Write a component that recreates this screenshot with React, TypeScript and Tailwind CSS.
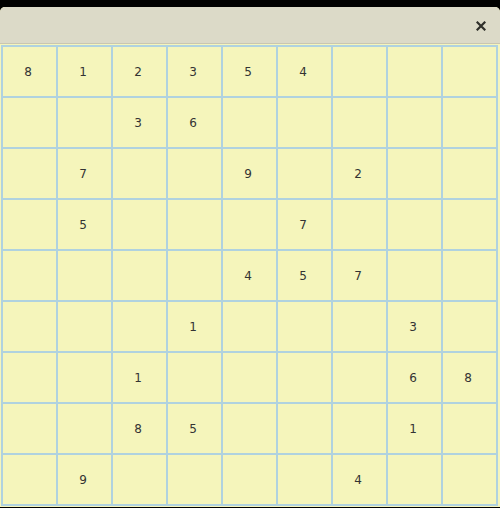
import React from 'react';

// 0 = empty cell
const board: number[][] = [
  [8, 1, 2, 3, 5, 4, 0, 0, 0],
  [0, 0, 3, 6, 0, 0, 0, 0, 0],
  [0, 7, 0, 0, 9, 0, 2, 0, 0],
  [0, 5, 0, 0, 0, 7, 0, 0, 0],
  [0, 0, 0, 0, 4, 5, 7, 0, 0],
  [0, 0, 0, 1, 0, 0, 0, 3, 0],
  [0, 0, 1, 0, 0, 0, 0, 6, 8],
  [0, 0, 8, 5, 0, 0, 0, 1, 0],
  [0, 9, 0, 0, 0, 0, 4, 0, 0],
];

const CloseIcon = () => (
  <svg width="10" height="10" viewBox="0 0 10 10">
    <path d="M1.5 1.5 L8.5 8.5 M8.5 1.5 L1.5 8.5" stroke="#2f2f2a" strokeWidth="2.2" strokeLinecap="square" />
  </svg>
);

const App: React.FC = () => {
  return (
    <div className="w-[500px] h-[508px] bg-black pt-[7px] overflow-hidden font-['DejaVu_Sans',sans-serif]">
      <div className="h-[500px] bg-[#f5f5bb] rounded-t-[5px] overflow-hidden flex flex-col">
        {/* title bar */}
        <div className="h-[37px] shrink-0 bg-[#dcdac8] border-b border-[#c9c6b2] flex items-center justify-end pr-[14px] pt-[1px]">
          <CloseIcon />
        </div>

        {/* board */}
        <div className="ml-[1px] mt-[1px] w-max border-l-2 border-t-2 border-[#b0d2df]">
          {board.map((row, r) => (
            <div key={r} className="flex">
              {row.map((v, c) => (
                <div
                  key={c}
                  className="w-[55px] h-[51px] border-r-2 border-b-2 border-[#b0d2df] flex items-center justify-center pr-[3px] text-[12px] text-[#333]"
                >
                  {v !== 0 ? v : ''}
                </div>
              ))}
            </div>
          ))}
        </div>
      </div>
    </div>
  );
};

export default App;
